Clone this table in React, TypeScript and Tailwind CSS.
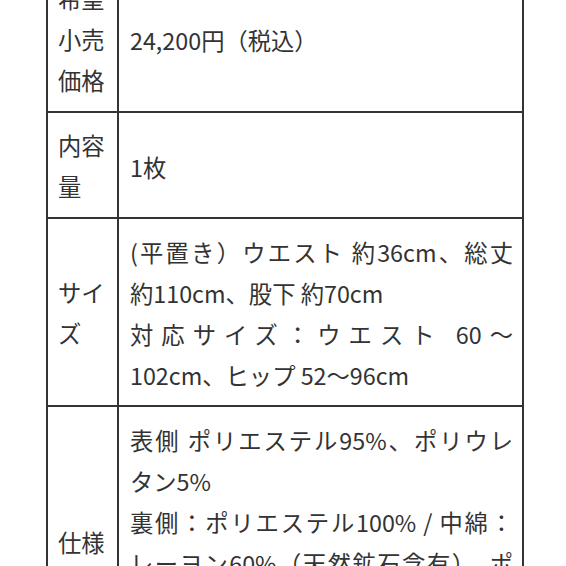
import React from "react";

const J = "text-justify [text-align-last:justify] whitespace-nowrap";
const N = "whitespace-nowrap";

function Row({ label, children }: { label: React.ReactNode; children: React.ReactNode }) {
  return (
    <div className="grid grid-cols-[71px_1fr] border-b-2 border-r-2 border-[#333]">
      <div className="flex flex-col justify-center border-r-2 border-[#333] pl-[10px] pr-[4px] pt-[12px] pb-[10px]">
        {label}
      </div>
      <div className="flex flex-col justify-center pl-[11px] pr-[9px] pt-[13px] pb-[9px]">{children}</div>
    </div>
  );
}

export default function App() {
  return (
    <div
      className="w-[566px] h-[566px] overflow-hidden bg-white text-[#333] text-[23.3px] leading-[41px]"
      style={{ fontFamily: '"Noto Sans CJK JP", "Noto Sans", sans-serif' }}
    >
      <div className="ml-[46px] mt-[-36px] w-[478px] border-l-2 border-t-2 border-[#333]">
        <Row
          label={
            <>
              <div>希望</div>
              <div>小売</div>
              <div>価格</div>
            </>
          }
        >
          <div className={N}>24,200円（税込）</div>
        </Row>
        <Row
          label={
            <>
              <div>内容</div>
              <div>量</div>
            </>
          }
        >
          <div className={N}>1枚</div>
        </Row>
        <Row
          label={
            <>
              <div>サイ</div>
              <div>ズ</div>
            </>
          }
        >
          <div className={J}>(平置き）ウエスト 約36cm、総丈</div>
          <div className={N}>約110cm、股下 約70cm</div>
          <div className={J}>対応サイズ：ウエスト 60～</div>
          <div className={N}>102cm、ヒップ 52〜96cm</div>
        </Row>
        <Row label={<div>仕様</div>}>
          <div className={J}>表側 ポリエステル95%、ポリウレ</div>
          <div className={N}>タン5%</div>
          <div className={J}>裏側：ポリエステル100% / 中綿：</div>
          <div className={J}>レーヨン60%（天然鉱石含有）、ポ</div>
          <div className={N}>リエステル40%</div>
          <div className={N}>日本製</div>
        </Row>
      </div>
    </div>
  );
}
